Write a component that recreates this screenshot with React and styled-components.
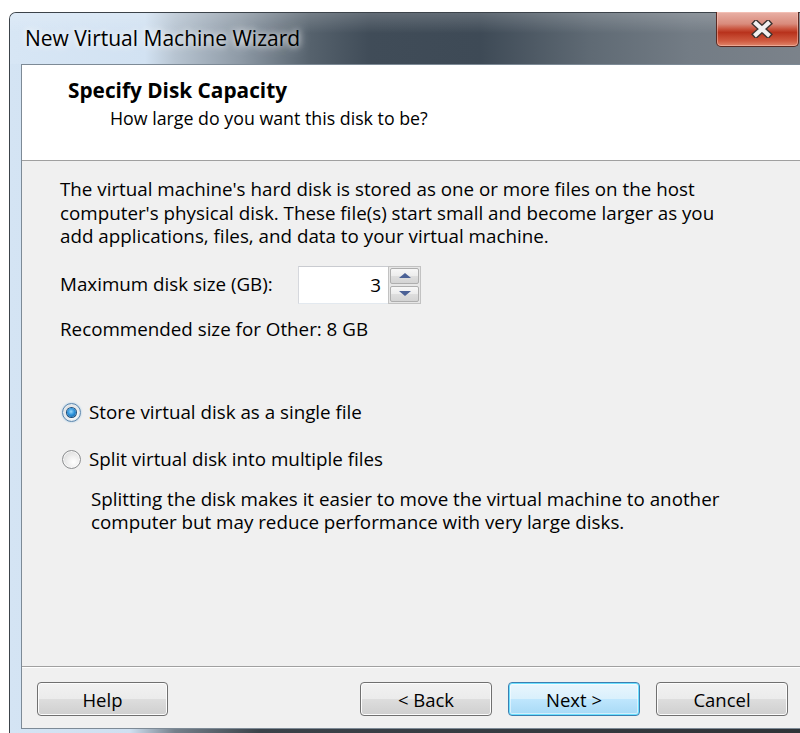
import React from 'react'
import styled, { createGlobalStyle, css } from 'styled-components'

const GlobalStyle = createGlobalStyle`
  html, body {
    margin: 0;
    padding: 0;
    background: #fff;
    overflow: hidden;
  }
  body {
    font-family: "Open Sans", "Noto Sans", sans-serif;
    color: #000;
  }
`

function CloseGlyph() {
    return (
        <svg width="22" height="18" viewBox="0 0 22 18">
            <g strokeLinecap="square">
                <path d="M5 3.5 L17 14.5 M17 3.5 L5 14.5" stroke="#3d3431" strokeWidth="7" />
                <path d="M5 3.5 L17 14.5 M17 3.5 L5 14.5" stroke="#f1f1f1" strokeWidth="4.2" />
            </g>
        </svg>
    )
}

function App() {
    return (
        <>
            <GlobalStyle />
            <Page>
                <Window>
                    <TitleBar>
                        <Caption>New Virtual Machine Wizard</Caption>
                        <CloseButton aria-label="Close">
                            <CloseGlyph />
                        </CloseButton>
                    </TitleBar>
                    <Client>
                        <Header>
                            <HeaderTitle>Specify Disk Capacity</HeaderTitle>
                            <HeaderSub>How large do you want this disk to be?</HeaderSub>
                        </Header>
                        <Body>
                            <Text>
                                The virtual machine's hard disk is stored as one or more files on the host<br />
                                computer's physical disk. These file(s) start small and become larger as you<br />
                                add applications, files, and data to your virtual machine.
                            </Text>
                            <SizeRow>
                                <SizeLabel>Maximum disk size (GB):</SizeLabel>
                                <SpinBox>
                                    <SpinField>3</SpinField>
                                    <SpinButtons>
                                        <SpinButton><Arrow /></SpinButton>
                                        <SpinButton><Arrow $down /></SpinButton>
                                    </SpinButtons>
                                </SpinBox>
                            </SizeRow>
                            <Recommended>Recommended size for Other: 8 GB</Recommended>
                            <Options>
                                <Option>
                                    <RadioMark $checked />
                                    Store virtual disk as a single file
                                </Option>
                                <Option>
                                    <RadioMark />
                                    Split virtual disk into multiple files
                                </Option>
                            </Options>
                            <Note>
                                Splitting the disk makes it easier to move the virtual machine to another<br />
                                computer but may reduce performance with very large disks.
                            </Note>
                        </Body>
                        <Footer>
                            <Button $width="131px">Help</Button>
                            <Spacer />
                            <Button>&lt; Back</Button>
                            <Button $primary>Next &gt;</Button>
                            <Button>Cancel</Button>
                        </Footer>
                    </Client>
                </Window>
            </Page>
        </>
    )
}

export default App

const Page = styled.div`
    width: 800px;
    height: 733px;
    box-sizing: border-box;
    padding: 12px 0 0 9px;
    overflow: hidden;
`

const Window = styled.div`
    width: 804px;
    box-sizing: border-box;
    border: 1px solid #3c434a;
    border-bottom: none;
    border-radius: 7px 7px 0 0;
    padding: 0 11px 6px 11px;
    display: flex;
    flex-direction: column;
    background: linear-gradient(to right, #d4e4f4 0, #cfe0f1 120px, #75808b 165px, #3b4249 250px, #2f3337 100%);
`

const TitleBar = styled.div`
    margin: 0 -11px;
    height: 51px;
    display: flex;
    align-items: flex-start;
    border-radius: 6px 6px 0 0;
    background:
        linear-gradient(to bottom, rgba(255,255,255,0.18), rgba(255,255,255,0) 40%),
        linear-gradient(to right, #d7e6f5 0, #d2e2f2 135px, #b7c4d1 165px, #8e9aa6 230px, #56626d 300px, #404c58 360px, #3e4a56 470px, #5f6a74 580px, #737c85 680px, #7c838b 100%);
`

const Caption = styled.div`
    flex: 1;
    padding-left: 15px;
    font-size: 21px;
    line-height: 50px;
    color: #000;
    text-shadow: 0 0 6px rgba(255,255,255,0.95), 0 0 12px rgba(255,255,255,0.7);
`

const CloseButton = styled.div`
    width: 83px;
    height: 35px;
    margin: -1px 13px 0 0;
    box-sizing: border-box;
    padding-left: 9px;
    display: flex;
    align-items: center;
    justify-content: center;
    border: 1px solid #5b2a22;
    border-top: none;
    border-radius: 0 0 5px 5px;
    box-shadow: inset 0 0 0 1px rgba(255,210,200,0.45);
    background: linear-gradient(to bottom, #e9b1a6 0, #d98b7c 35%, #c9533d 50%, #b8321c 60%, #cf5a40 85%, #e0866b 100%);
`

const Client = styled.div`
    height: 665px;
    box-sizing: border-box;
    border: 1px solid #7d8a96;
    background: #f0f0f0;
    display: flex;
    flex-direction: column;
`

const Header = styled.div`
    height: 96px;
    box-sizing: border-box;
    flex-shrink: 0;
    padding: 13px 0 0 46px;
    background: #fff;
    border-bottom: 1px solid #a0a0a0;
`

const HeaderTitle = styled.div`
    font-size: 20.8px;
    font-weight: 700;
    line-height: 24px;
`

const HeaderSub = styled.div`
    margin-top: 4px;
    padding-left: 42px;
    font-size: 17.8px;
    line-height: 24px;
`

const Body = styled.div`
    flex: 1;
    padding: 17px 0 0 38px;
    font-size: 18.8px;
    line-height: 23.5px;
`

const Text = styled.p`
    margin: 0;
`

const SizeRow = styled.div`
    margin-top: 17px;
    height: 38px;
    display: flex;
    align-items: center;
`

const SizeLabel = styled.span`
    width: 238px;
    flex-shrink: 0;
`

const SpinBox = styled.div`
    display: flex;
    height: 38px;
`

const SpinField = styled.div`
    width: 90px;
    box-sizing: border-box;
    padding-right: 7px;
    background: #fff;
    border: 1px solid;
    border-color: #c9cbd0 #e3e9ef #e3e9ef #d6d8dd;
    border-right: none;
    text-align: right;
    line-height: 36px;
`

const SpinButtons = styled.div`
    width: 33px;
    box-sizing: border-box;
    padding: 1px;
    display: flex;
    flex-direction: column;
    gap: 2px;
    background: #e6e6e6;
    border: 1px solid #c2c2c2;
`

const SpinButton = styled.div`
    flex: 1;
    display: grid;
    place-items: center;
    border: 1px solid #aeaeae;
    border-radius: 2px;
    background: linear-gradient(to bottom, #f7f7f7 0, #ececec 50%, #dedede 51%, #d4d4d4 100%);
`

const Arrow = styled.span`
    width: 0;
    height: 0;
    border-left: 6px solid transparent;
    border-right: 6px solid transparent;
    ${p => p.$down
        ? css`border-top: 5px solid #4b6196;`
        : css`border-bottom: 5px solid #4b6196;`}
`

const Recommended = styled.div`
    margin-top: 14px;
`

const Options = styled.div`
    margin-top: 60px;
    display: flex;
    flex-direction: column;
    gap: 23.5px;
`

const Option = styled.div`
    display: flex;
    align-items: center;
    gap: 8px;
    padding-left: 2px;
`

const RadioMark = styled.span`
    width: 19px;
    height: 19px;
    box-sizing: border-box;
    border-radius: 50%;
    border: 1px solid #8c8e90;
    display: grid;
    place-items: center;
    background: radial-gradient(circle at 62% 65%, #ffffff 0, #f1f1f1 35%, #d2d2d2 100%);
    box-shadow: inset 0 0 0 1px rgba(255,255,255,0.7);

    ${p => p.$checked && css`
        border-color: #5b86ad;
        box-shadow: 0 0 2px rgba(80,160,220,0.6), inset 0 0 0 1px #dfeaf3;
        &::after {
            content: '';
            width: 9px;
            height: 9px;
            border-radius: 50%;
            background: radial-gradient(circle at 45% 40%, #9ad9fb 0, #2d93dc 45%, #0c4f8c 100%);
            box-shadow: 0 0 0 1px #1d4f7d;
        }
    `}
`

const Note = styled.p`
    margin: 16px 0 0 31px;
`

const Footer = styled.div`
    height: 62px;
    box-sizing: border-box;
    flex-shrink: 0;
    padding: 15px 12px 0 15px;
    display: flex;
    align-items: flex-start;
    gap: 16px;
    border-top: 1px solid #a0a0a0;
    box-shadow: inset 0 1px 0 #fff;
`

const Spacer = styled.div`
    flex: 1;
`

const Button = styled.div`
    width: ${p => p.$width || '132px'};
    height: 34px;
    box-sizing: border-box;
    display: grid;
    place-items: center;
    font-size: 18.5px;
    border: 1px solid #707070;
    border-radius: 4px;
    box-shadow: inset 0 0 0 1px #fcfcfc;
    background: linear-gradient(to bottom, #f2f2f2 0, #ebebeb 50%, #dddddd 51%, #cfcfcf 100%);

    ${p => p.$primary && css`
        border-color: #3c7fb1;
        box-shadow: inset 0 0 0 1px #6ce0ff, inset 0 0 0 2px rgba(255,255,255,0.5);
        background: linear-gradient(to bottom, #eaf6fd 0, #d9f0fc 50%, #bee6fd 51%, #a7d9f5 100%);
    `}
`
